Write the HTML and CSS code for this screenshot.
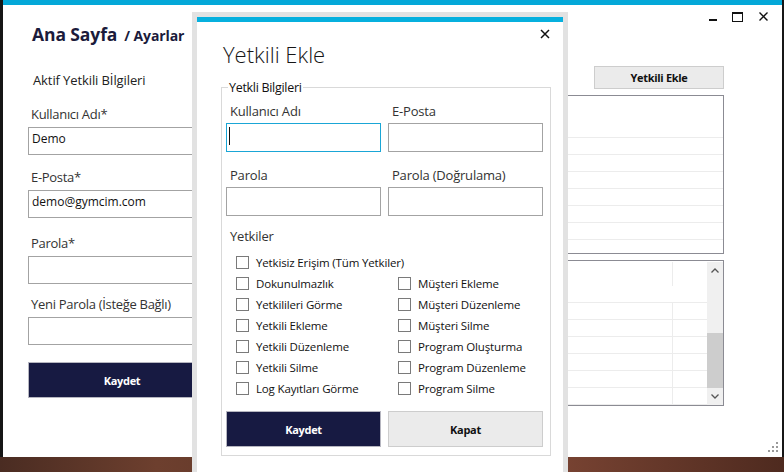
FILE: index.html
```html
<!DOCTYPE html>
<html lang="tr">
<head>
<meta charset="utf-8">
<title>Ayarlar</title>
<link rel="stylesheet" href="styles.css">
</head>
<body>
<div class="desktop">
  <div class="window">
    <div class="titlebar">
      <span class="ctl ctl-min"></span>
      <span class="ctl ctl-max"></span>
      <svg class="ctl ctl-close" width="9" height="9" viewBox="0 0 9 9"><path d="M0.5 0.5 L8.5 8.5 M8.5 0.5 L0.5 8.5" stroke="#111" stroke-width="1.4" fill="none"/></svg>
    </div>
    <div class="header"><span class="h-main">Ana Sayfa</span><span class="h-sub">/ Ayarlar</span></div>
    <div class="content">
      <div class="left">
        <div class="section-title">Aktif Yetkili Bİlgileri</div>
        <div class="field field-1"><div class="label">Kullanıcı Adı*</div><div class="input">Demo</div></div>
        <div class="field field-2"><div class="label">E-Posta*</div><div class="input">demo@gymcim.com</div></div>
        <div class="field field-3"><div class="label">Parola*</div><div class="input"></div></div>
        <div class="field field-4"><div class="label">Yeni Parola (İsteğe Bağlı)</div><div class="input"></div></div>
        <button class="btn btn-primary btn-save">Kaydet</button>
      </div>
      <div class="right">
        <button class="btn btn-light btn-add">Yetkili Ekle</button>
        <div class="grid grid-top">
          <div class="grid-head"></div>
          <div class="grid-row"></div><div class="grid-row"></div><div class="grid-row"></div>
          <div class="grid-row"></div><div class="grid-row"></div><div class="grid-row"></div>
          <div class="grid-row"></div>
        </div>
        <div class="grid grid-bottom">
          <div class="grid-body">
            <div class="grid-head split"><span class="cell"></span><span class="cell cell-2"></span></div>
            <div class="grid-row split"><span class="cell"></span><span class="cell cell-2"></span></div>
            <div class="grid-row split"><span class="cell"></span><span class="cell cell-2"></span></div>
            <div class="grid-row split"><span class="cell"></span><span class="cell cell-2"></span></div>
            <div class="grid-row split"><span class="cell"></span><span class="cell cell-2"></span></div>
            <div class="grid-row split"><span class="cell"></span><span class="cell cell-2"></span></div>
            <div class="grid-row split"><span class="cell"></span><span class="cell cell-2"></span></div>
          </div>
          <div class="scrollbar">
            <div class="sb-btn"><svg width="8" height="5" viewBox="0 0 8 5"><path d="M0.5 4.5 L4 1 L7.5 4.5" stroke="#555" stroke-width="1.3" fill="none"/></svg></div>
            <div class="sb-track"><div class="sb-thumb"></div></div>
            <div class="sb-btn"><svg width="8" height="5" viewBox="0 0 8 5"><path d="M0.5 0.5 L4 4 L7.5 0.5" stroke="#555" stroke-width="1.3" fill="none"/></svg></div>
          </div>
        </div>
      </div>
    </div>
    <svg class="grip" width="11" height="11" viewBox="0 0 11 11">
      <rect x="8" y="0" width="2" height="2" fill="#9a9a9a"/>
      <rect x="4" y="4" width="2" height="2" fill="#9a9a9a"/><rect x="8" y="4" width="2" height="2" fill="#9a9a9a"/>
      <rect x="0" y="8" width="2" height="2" fill="#9a9a9a"/><rect x="4" y="8" width="2" height="2" fill="#9a9a9a"/><rect x="8" y="8" width="2" height="2" fill="#9a9a9a"/>
    </svg>

    <div class="dialog">
      <div class="dialog-body">
        <div class="dialog-top">
          <svg class="dialog-close" width="10" height="10" viewBox="0 0 10 10"><path d="M1 1 L9 9 M9 1 L1 9" stroke="#111" stroke-width="1.5" fill="none"/></svg>
        </div>
        <div class="dialog-title">Yetkili Ekle</div>
        <fieldset class="group">
          <legend>Yetkli Bilgileri</legend>
          <div class="form-grid">
            <div class="dfield"><div class="dlabel">Kullanıcı Adı</div><div class="dinput focused"><span class="caret"></span></div></div>
            <div class="dfield"><div class="dlabel">E-Posta</div><div class="dinput"></div></div>
            <div class="dfield row-2"><div class="dlabel">Parola</div><div class="dinput"></div></div>
            <div class="dfield row-2"><div class="dlabel">Parola (Doğrulama)</div><div class="dinput"></div></div>
          </div>
          <div class="perm-title">Yetkiler</div>
          <div class="perms">
            <label class="chk wide"><span class="box"></span>Yetkisiz Erişim (Tüm Yetkiler)</label>
            <label class="chk"><span class="box"></span>Dokunulmazlık</label>
            <label class="chk"><span class="box"></span>Müşteri Ekleme</label>
            <label class="chk"><span class="box"></span>Yetkilileri Görme</label>
            <label class="chk"><span class="box"></span>Müşteri Düzenleme</label>
            <label class="chk"><span class="box"></span>Yetkili Ekleme</label>
            <label class="chk"><span class="box"></span>Müşteri Silme</label>
            <label class="chk"><span class="box"></span>Yetkili Düzenleme</label>
            <label class="chk"><span class="box"></span>Program Oluşturma</label>
            <label class="chk"><span class="box"></span>Yetkili Silme</label>
            <label class="chk"><span class="box"></span>Program Düzenleme</label>
            <label class="chk"><span class="box"></span>Log Kayıtları Görme</label>
            <label class="chk"><span class="box"></span>Program Silme</label>
          </div>
          <div class="dialog-actions">
            <button class="btn btn-primary">Kaydet</button>
            <button class="btn btn-light">Kapat</button>
          </div>
        </fieldset>
      </div>
    </div>
  </div>
</div>
</body>
</html>
```
FILE: styles.css
```css
* { box-sizing: border-box; }
html, body { margin: 0; padding: 0; }
body {
  width: 784px;
  height: 472px;
  overflow: hidden;
  font-family: "Open Sans", "Noto Sans", sans-serif;
  color: #1e1e1e;
}
.desktop {
  width: 784px;
  height: 472px;
  padding-left: 3px;
  background:
    linear-gradient(#161616, #161616) top left / 100% 457px no-repeat,
    linear-gradient(90deg, #4a2c22 0%, #6d3f2e 20%, #5b3426 45%, #7a4433 70%, #4e2a1f 100%);
}
.window {
  position: relative;
  width: 779px;
  height: 457px;
  background: #fff;
  border-top: 5px solid #04a8d8;
  display: flex;
  flex-direction: column;
}
.titlebar {
  height: 17px;
  display: flex;
  justify-content: flex-end;
  align-items: flex-start;
  padding-right: 14px;
}
.ctl { display: block; }
.ctl-min { width: 8px; height: 2px; background: #111; margin-top: 14px; margin-right: 15px; }
.ctl-max { width: 11px; height: 10px; border: 1px solid #111; border-top-width: 2px; margin-top: 7px; margin-right: 16px; }
.ctl-close { margin-top: 7px; }

.header {
  height: 24px;
  line-height: 24px;
  padding-left: 29px;
  color: #1b1b3b;
  font-weight: 700;
  white-space: nowrap;
}
.h-main { font-size: 17.5px; letter-spacing: -0.1px; }
.h-sub { font-size: 14px; margin-left: 7px; letter-spacing: -0.1px; }

.content {
  flex: 1;
  display: flex;
  padding-left: 25px;
  padding-right: 58px;
}
.left { width: 188px; display: flex; flex-direction: column; }
.section-title {
  margin-top: 24px;
  padding-left: 5px;
  font-size: 13px;
  letter-spacing: -0.1px;
  line-height: 20px;
  color: #222;
}
.field .label {
  padding-left: 3px;
  font-size: 13px;
  letter-spacing: -0.3px;
  line-height: 20px;
  color: #333;
}
.field .input {
  margin-top: 3px;
  height: 28px;
  border: 1px solid #a3a3a3;
  padding: 3px 0 0 3px;
  font-size: 12px;
  line-height: 16px;
  font-weight: 500;
  color: #111;
}
.field-1 { margin-top: 14px; }
.field-2 { margin-top: 12px; }
.field-3 { margin-top: 15px; }
.field-4 { margin-top: 10px; }

.btn {
  font-family: inherit;
  font-size: 11px;
  letter-spacing: -0.3px;
  font-weight: 700;
  cursor: default;
  padding: 0;
}
.btn-primary { background: #171a42; color: #fff; border: 1px solid #b6b6c0; }
.btn-light { background: #ebebeb; color: #111; border: 1px solid #cdcdcd; }
.btn-save { margin-top: 17px; height: 36px; width: 188px; }

.right {
  flex: 1;
  margin-left: 24px;
  display: flex;
  flex-direction: column;
}
.btn-add { align-self: flex-end; margin-top: 20px; width: 130px; height: 23px; }
.grid {
  border: 1px solid #8b8b93;
  overflow: hidden;
}
.grid-top { margin-top: 6px; height: 159px; }
.grid-bottom { margin-top: 6px; height: 146px; display: flex; }
.grid-head { height: 42px; border-bottom: 1px solid #ececec; }
.grid-row { height: 17px; border-bottom: 1px solid #ececec; }
.grid-body { flex: 1; overflow: hidden; }
.split { display: flex; }
.split .cell { flex: 1; }
.split .cell-2 { flex: 0 0 35px; border-left: 1px solid #ececec; }
.grid-head.split .cell-2 { margin-top: 1px; height: 24px; }
.scrollbar {
  width: 16px;
  margin: 1px 0 0;
  background: #f0f0f0;
  display: flex;
  flex-direction: column;
}
.sb-btn { height: 17px; display: flex; align-items: center; justify-content: center; }
.sb-track { flex: 1; display: flex; flex-direction: column; justify-content: flex-end; }
.sb-thumb { height: 55px; background: #cdcdcd; }

.grip { position: absolute; right: 3px; bottom: 4px; }

/* dialog */
.dialog {
  position: absolute;
  left: 189px;
  top: 7px;
  width: 376px;
  height: 470px;
  border: 5px solid #e2e2e2;
  border-bottom: none;
  background: #fff;
}
.dialog-body {
  height: 100%;
  border-top: 5px solid #06b0de;
}
.dialog-top {
  height: 16px;
  display: flex;
  justify-content: flex-end;
  align-items: flex-start;
  padding-right: 13px;
}
.dialog-close { margin-top: 7px; }
.dialog-title {
  padding-left: 26px;
  font-size: 22px;
  font-weight: 300;
  line-height: 32px;
  color: #161616;
}
.group {
  margin: 10px 12px 0 24px;
  padding: 0 6px 8px 4px;
  border: 1px solid #d9d9d9;
  min-width: 0;
}
.group legend {
  margin-left: 2px;
  padding: 0 1px;
  font-size: 12.5px;
  letter-spacing: -0.3px;
  line-height: 15px;
  color: #111;
}
.form-grid {
  display: grid;
  grid-template-columns: 155px 155px;
  column-gap: 7px;
}
.dfield { margin-top: 6px; }
.dfield.row-2 { margin-top: 13px; }
.dlabel {
  padding-left: 4px;
  font-size: 13px;
  letter-spacing: -0.2px;
  line-height: 20px;
  color: #333;
}
.dinput {
  margin-top: 2px;
  height: 29px;
  border: 1px solid #a3a3a3;
  padding: 3px 0 0 2px;
}
.dinput.focused { border-color: #1aa6d6; }
.caret { display: block; width: 1px; height: 18px; background: #111; }
.perm-title {
  margin-top: 10px;
  padding-left: 4px;
  font-size: 13px;
  letter-spacing: -0.2px;
  line-height: 20px;
  color: #333;
}
.perms {
  margin-top: 6px;
  padding-left: 10px;
  display: grid;
  grid-template-columns: 162px 1fr;
  grid-auto-rows: 21px;
}
.chk {
  display: flex;
  align-items: center;
  font-size: 11.5px;
  letter-spacing: -0.15px;
  color: #111;
  white-space: nowrap;
}
.chk.wide { grid-column: 1 / span 2; }
.box {
  width: 13px;
  height: 13px;
  border: 1px solid #7a7a7a;
  margin-right: 7px;
  flex: none;
  background: #fff;
}
.dialog-actions {
  margin-top: 12px;
  display: flex;
  gap: 7px;
}
.dialog-actions .btn { width: 155px; height: 36px; }
```
